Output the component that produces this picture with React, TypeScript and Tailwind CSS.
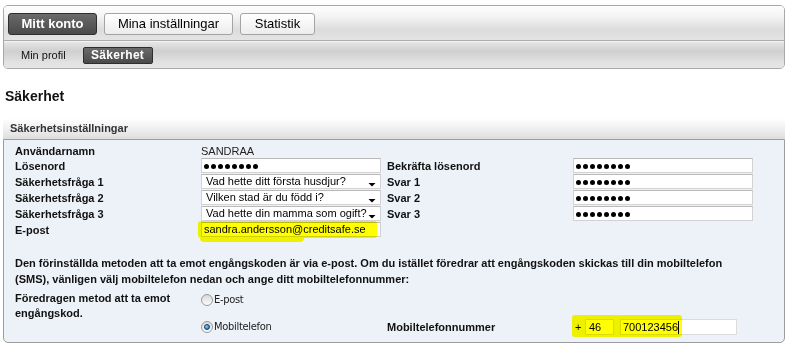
const Label = ({ children }: { children: React.ReactNode }) => (
  <div className="font-bold text-[11px] leading-[16px] text-[#111]">{children}</div>
);

const TextBox = ({ children }: { children?: React.ReactNode }) => (
  <div className="h-[15px] w-[180px] bg-white border border-[#d2d2d2] border-t-[#b9b9b9] px-[2px] text-[11px] leading-[13px] text-black flex items-center overflow-hidden whitespace-nowrap">
    {children}
  </div>
);

const Dots = () => (
  <div className="flex gap-[2px] pt-[2px]">
    {[0, 1, 2, 3, 4, 5, 6, 7].map((i) => (
      <span key={i} className="w-[5px] h-[5px] rounded-full bg-black" />
    ))}
  </div>
);

const SelectBox = ({ value }: { value: string }) => (
  <div className="h-[15px] w-[180px] bg-white border border-[#d2d2d2] border-t-[#b9b9b9] pl-[4px] pr-[4px] flex items-center justify-between text-[11px] leading-[13px] whitespace-nowrap">
    <span>{value}</span>
    <svg width="8" height="10" viewBox="0 0 8 10" className="self-end">
      <path d="M0.5 5 L7.5 5 L4 8.5 Z" fill="#000" />
    </svg>
  </div>
);

const Radio = ({ checked, label }: { checked?: boolean; label: string }) => (
  <div className="flex items-center text-[11px] font-['DejaVu_Sans_Condensed','Liberation_Sans',sans-serif] tracking-[-0.3px] text-[#222]">
    <span className="w-[12px] h-[12px] rounded-full border border-[#9a9a9a] bg-[linear-gradient(#d8d8d8,#fdfdfd)] flex items-center justify-center">
      {checked && (
        <span className="w-[6px] h-[6px] rounded-full bg-[radial-gradient(circle_at_35%_35%,#8fd0ff,#0a5fb0)] border border-[#0b3d73]" />
      )}
    </span>
    <span className="ml-[1px]">{label}</span>
  </div>
);

const App = () => {
  return (
    <div className="relative w-[788px] h-[348px] overflow-hidden bg-white font-['Liberation_Sans',Arial,sans-serif] text-[11px] text-black">
      {/* top navigation */}
      <div className="mx-[3px] mt-[5px] h-[64px] rounded-[5px] border border-[#a8a8a8] overflow-hidden">
        <div className="h-[35px] pt-[7px] pl-[4px] flex gap-[7px] bg-[linear-gradient(#fefefe,#f4f4f4_30%,#dcdcdc_70%,#e4e4e4)] border-b border-[#adadad]">
          <div className="w-[89px] h-[22px] rounded-[3px] border border-[#2e2e2e] bg-[linear-gradient(#6a6a6a,#4a4a4a)] text-white font-bold text-[13px] flex items-center justify-center">
            Mitt konto
          </div>
          <div className="w-[129px] h-[22px] rounded-[3px] border border-[#a4a4a4] bg-[linear-gradient(#ffffff,#ececec)] text-[13px] flex items-center justify-center">
            Mina inställningar
          </div>
          <div className="w-[75px] h-[22px] rounded-[3px] border border-[#a4a4a4] bg-[linear-gradient(#ffffff,#ececec)] text-[13px] flex items-center justify-center">
            Statistik
          </div>
        </div>
        <div className="h-[27px] flex items-center pl-[17px] bg-[linear-gradient(#e6e6e6,#cfcfcf_35%,#e2e2e2_80%,#e6e6e6)] border-t border-[#f4f4f4]">
          <span className="text-[11px] text-[#111]">Min profil</span>
          <div className="ml-[17px] w-[70px] h-[17px] rounded-[2px] border border-[#2e2e2e] bg-[linear-gradient(#6a6a6a,#4a4a4a)] text-white font-bold text-[12px] tracking-[0.3px] flex items-center justify-center">
            Säkerhet
          </div>
        </div>
      </div>

      <h1 className="mt-[19px] ml-[5px] text-[14px] leading-[16px] font-bold text-[#111]">Säkerhet</h1>

      {/* section */}
      <div className="mt-[14px] mx-[3px]">
        <div className="h-[21px] pl-[7px] flex items-center bg-[linear-gradient(#ffffff,#f3f3f3_40%,#dedede)] text-[11px] font-bold text-[#333]">
          Säkerhetsinställningar
        </div>
        <div className="h-[204px] border border-[#9c9c9c] rounded-b-[5px] bg-[#edf1f8] pt-[4px] pl-[11px]">
          <div className="grid grid-cols-[186px_180px_6px_186px_180px] grid-rows-[14px_16px_16px_16px_16px_16px]">
            <div className="leading-[14px] font-bold text-[#111]">Användarnamn</div>
            <div className="leading-[14px] text-[#222]">SANDRAA</div>
            <div />
            <div />
            <div />

            <Label>Lösenord</Label>
            <TextBox><Dots /></TextBox>
            <div />
            <Label>Bekräfta lösenord</Label>
            <TextBox><Dots /></TextBox>

            <Label>Säkerhetsfråga 1</Label>
            <SelectBox value="Vad hette ditt första husdjur?" />
            <div />
            <Label>Svar 1</Label>
            <TextBox><Dots /></TextBox>

            <Label>Säkerhetsfråga 2</Label>
            <SelectBox value="Vilken stad är du född i?" />
            <div />
            <Label>Svar 2</Label>
            <TextBox><Dots /></TextBox>

            <Label>Säkerhetsfråga 3</Label>
            <SelectBox value="Vad hette din mamma som ogift?" />
            <div />
            <Label>Svar 3</Label>
            <TextBox><Dots /></TextBox>

            <Label>E-post</Label>
            <TextBox>sandra.andersson@creditsafe.se</TextBox>
            <div />
            <div />
            <div />
          </div>

          <p className="mt-[17px] font-bold text-[11px] leading-[16px] text-[#111] whitespace-nowrap">
            Den förinställda metoden att ta emot engångskoden är via e-post. Om du istället föredrar att engångskoden skickas till din mobiltelefon
            <br />
            (SMS), vänligen välj mobiltelefon nedan och ange ditt mobiltelefonnummer:
          </p>

          <div className="mt-[4px] grid grid-cols-[186px_186px_186px_auto] grid-rows-[28px_16px]">
            <div className="row-span-2 font-bold text-[11px] leading-[15px] text-[#111]">
              Föredragen metod att ta emot
              <br />
              engångskod.
            </div>
            <div className="pt-[1px]">
              <Radio label="E-post" />
            </div>
            <div />
            <div />
            <div className="flex items-center">
              <Radio checked label="Mobiltelefon" />
            </div>
            <div className="flex items-center font-bold text-[11px] text-[#111]">Mobiltelefonnummer</div>
            <div className="flex items-center">
              <span className="w-[12px] pl-[2px] text-[11px]">+</span>
              <div className="h-[16px] w-[29px] border border-[#dcdcdc] bg-white px-[3px] flex items-center text-[11px]">46</div>
              <div className="ml-[6px] h-[16px] w-[117px] border border-[#dcdcdc] bg-white px-[2px] flex items-center text-[11px]">
                700123456
                <span className="w-px h-[13px] bg-black" />
              </div>
            </div>
          </div>
        </div>
      </div>

      {/* highlighter marks */}
      <div className="absolute left-[198px] top-[221px] w-[179px] h-[17px] rounded-[3px] bg-[#ffff00] mix-blend-multiply" />
      <div className="absolute left-[200px] top-[236px] w-[104px] h-[6px] rounded-b-[4px] bg-[#ffff00] mix-blend-multiply" />
      <div className="absolute left-[572px] top-[315px] w-[110px] h-[22px] rounded-[3px] bg-[#ffff00] mix-blend-multiply" />
    </div>
  );
};

export default App;
